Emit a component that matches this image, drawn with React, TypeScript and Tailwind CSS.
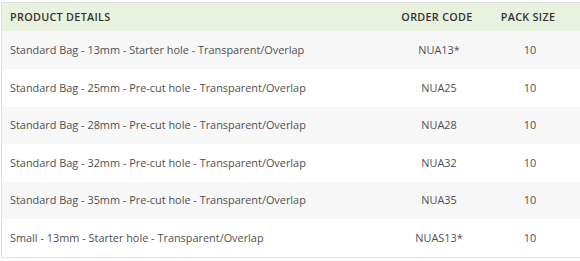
import React from "react";

const rows = [
  ["Standard Bag - 13mm - Starter hole - Transparent/Overlap", "NUA13*", "10", "h-[38px]"],
  ["Standard Bag - 25mm - Pre-cut hole - Transparent/Overlap", "NUA25", "10", "h-[38px]"],
  ["Standard Bag - 28mm - Pre-cut hole - Transparent/Overlap", "NUA28", "10", "h-[37px]"],
  ["Standard Bag - 32mm - Pre-cut hole - Transparent/Overlap", "NUA32", "10", "h-[38px]"],
  ["Standard Bag - 35mm - Pre-cut hole - Transparent/Overlap", "NUA35", "10", "h-[37px]"],
  ["Small - 13mm - Starter hole - Transparent/Overlap", "NUAS13*", "10", "h-[38px]"],
];

export default function App() {
  return (
    <div className="w-[580px] h-[261px] bg-white pt-[2px] pl-[1px] overflow-hidden" style={{ fontFamily: '"Open Sans", "Liberation Sans", sans-serif' }}>
      <div className="w-[585px] border-l border-t border-b border-[#dedede]">
        <div className="flex h-[28px] items-center bg-[#e9f1df] text-[10.8px] font-semibold text-[#333] tracking-[0.3px]">
          <div className="w-[389px] pl-[8px]">PRODUCT DETAILS</div>
          <div className="w-[92px] text-center">ORDER CODE</div>
          <div className="w-[90px] text-center">PACK SIZE</div>
        </div>
        {rows.map((r, i) => (
          <div
            key={i}
            className={`flex items-center ${r[3]} text-[10.9px] text-[#505050] ${i % 2 === 0 ? "bg-[#f7f7f7]" : "bg-white"}`}
          >
            <div className="w-[389px] pl-[8px]">{r[0]}</div>
            <div className="w-[92px] text-center pl-[4px]">{r[1]}</div>
            <div className="w-[90px] text-center pl-[4px]">{r[2]}</div>
          </div>
        ))}
      </div>
    </div>
  );
}
